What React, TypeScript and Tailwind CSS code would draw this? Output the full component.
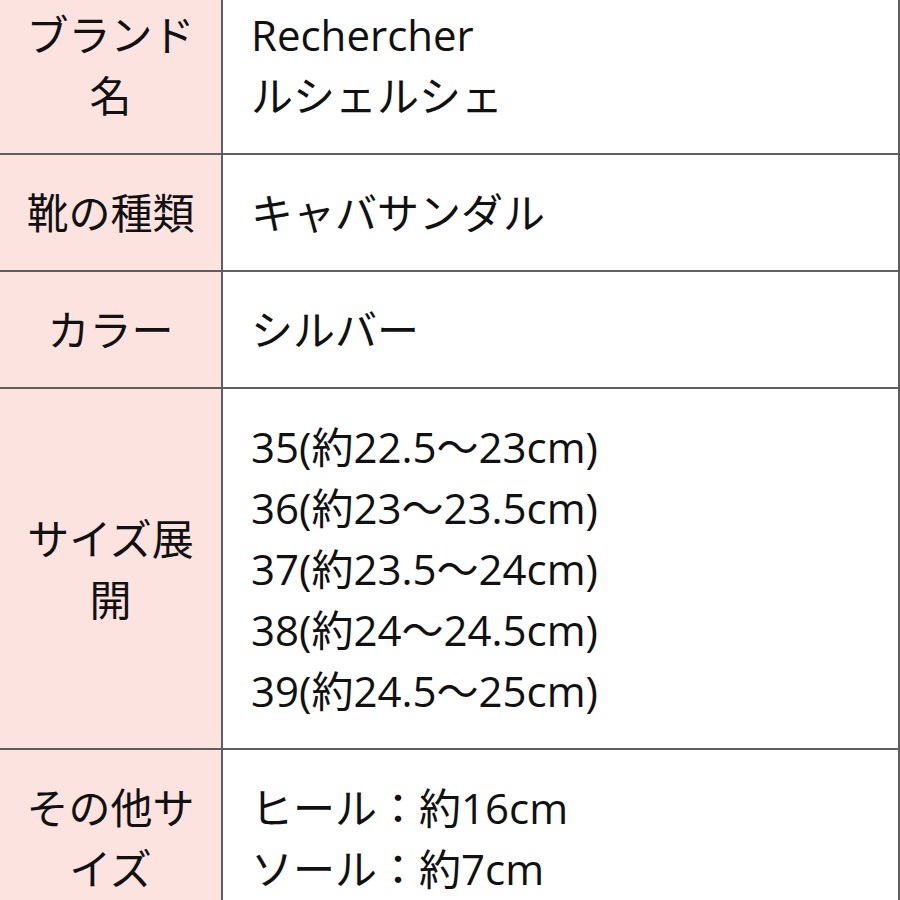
const rows: { label: string[]; value: string[] }[] = [
  { label: ["ブランド", "名"], value: ["Rechercher", "ルシェルシェ"] },
  { label: ["靴の種類"], value: ["キャバサンダル"] },
  { label: ["カラー"], value: ["シルバー"] },
  {
    label: ["サイズ展", "開"],
    value: [
      "35(約22.5～23cm)",
      "36(約23～23.5cm)",
      "37(約23.5～24cm)",
      "38(約24～24.5cm)",
      "39(約24.5～25cm)",
    ],
  },
  { label: ["その他サ", "イズ"], value: ["ヒール：約16cm", "ソール：約7cm"] },
]

export default function App() {
  return (
    <div className="w-[900px] h-[900px] overflow-hidden bg-white">
      <div
        className="-mt-[25px] border-r-2 border-[#5f5f5f] text-[42px] leading-[61px] text-[#111]"
        style={{ fontFamily: '"Open Sans", "Noto Sans CJK JP", sans-serif' }}
      >
        {rows.map((row, i) => (
          <div key={i} className="flex border-t-2 border-[#5f5f5f]">
            <div className="w-[223px] shrink-0 bg-[#fde3e0] py-[27px] flex flex-col items-center justify-center text-center border-r-2 border-[#5f5f5f]">
              {row.label.map((l, j) => (
                <div key={j} className="whitespace-nowrap">{l}</div>
              ))}
            </div>
            <div className="flex-1 py-[27px] pl-[28px] flex flex-col justify-center">
              {row.value.map((v, j) => (
                <div key={j} className="whitespace-nowrap">{v}</div>
              ))}
            </div>
          </div>
        ))}
      </div>
    </div>
  )
}
